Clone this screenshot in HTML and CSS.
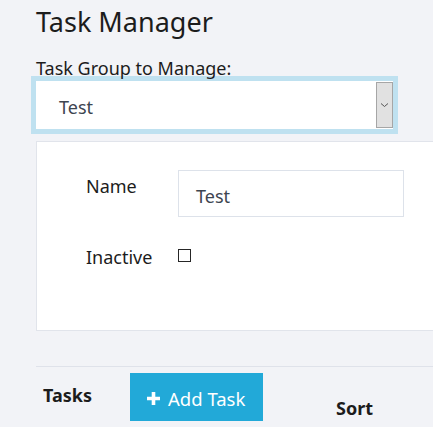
FILE: index.html
```html
<!DOCTYPE html>
<html>
<head>
<meta charset="utf-8">
<link rel="stylesheet" href="styles.css">
</head>
<body>
<div class="page">
  <h1 class="title">Task Manager</h1>
  <div class="group-label">Task Group to Manage:</div>
  <div class="select">
    <span class="select-value">Test</span>
    <span class="select-btn">
      <svg width="9" height="6" viewBox="0 0 9 6"><path d="M1 1.5 L4.5 4.5 L8 1.5" fill="none" stroke="#555" stroke-width="1"/></svg>
    </span>
  </div>
  <div class="card">
    <div class="row">
      <div class="field-label">Name</div>
      <div class="text-input">Test</div>
    </div>
    <div class="row row-inactive">
      <div class="field-label">Inactive</div>
      <span class="checkbox"></span>
    </div>
  </div>
  <div class="divider"></div>
  <div class="tasks-bar">
    <div class="tasks-label">Tasks</div>
    <button class="add-btn">
      <svg class="plus" width="13" height="13" viewBox="0 0 13 13"><path d="M6.5 0 V13 M0 6.5 H13" stroke="#fff" stroke-width="3.6"/></svg>
      <span>Add Task</span>
    </button>
    <div class="sort-label">Sort</div>
  </div>
</div>
</body>
</html>
```
FILE: styles.css
```css
html, body {
  margin: 0;
  padding: 0;
  background: #f2f3f7;
  overflow: hidden;
  height: 427px;
}
body {
  font-family: "Noto Sans", "Open Sans", sans-serif;
  color: #1c1c1c;
}
.page {
  padding-left: 36px;
}
.title {
  margin: 4px 0 0 0;
  font-size: 27px;
  line-height: 36px;
  font-weight: 400;
}
.group-label {
  margin-top: 17px;
  font-size: 18px;
  line-height: 22px;
}
.select {
  margin-top: 2px;
  width: 357px;
  height: 48px;
  box-sizing: border-box;
  background: #fff;
  box-shadow: 0 0 0 5px #bfe1f0;
  display: flex;
  justify-content: space-between;
}
.select-value {
  padding: 4px 0 0 23px;
  line-height: 44px;
  font-size: 18px;
  color: #3d4550;
}
.select-btn {
  margin-top: 1px;
  width: 17px;
  height: 46px;
  box-sizing: border-box;
  background: #e1e1e1;
  border: 1px solid #a6a6a6;
  display: flex;
  align-items: center;
  justify-content: center;
}
.card {
  margin-top: 12px;
  height: 190px;
  box-sizing: border-box;
  background: #fff;
  border: 1px solid #e1e4eb;
  border-right: none;
  padding: 28px 0 0 49px;
}
.row {
  display: flex;
  align-items: flex-start;
}
.field-label {
  width: 92px;
  margin-top: 5px;
  font-size: 18px;
  line-height: 22px;
}
.text-input {
  width: 226px;
  height: 47px;
  box-sizing: border-box;
  border: 1px solid #dde2ea;
  padding: 5px 0 0 17px;
  line-height: 40px;
  font-size: 18px;
  color: #3d4550;
}
.row-inactive {
  margin-top: 24px;
}
.checkbox {
  margin-top: 8px;
  width: 13px;
  height: 13px;
  box-sizing: border-box;
  border: 1px solid #262626;
  background: #fff;
}
.divider {
  margin-top: 35px;
  height: 1px;
  background: #dfe2ea;
}
.tasks-bar {
  margin-top: 6px;
  display: flex;
  align-items: flex-start;
}
.tasks-label {
  margin: 11px 0 0 7px;
  width: 87px;
  font-size: 18px;
  line-height: 22px;
  font-weight: 700;
}
.add-btn {
  width: 133px;
  height: 48px;
  border: none;
  background: #22a9d8;
  color: #fff;
  font-family: inherit;
  font-size: 18.5px;
  padding: 2px 0 0 17px;
  display: flex;
  align-items: center;
  gap: 8px;
  margin: 0;
}
.sort-label {
  margin: 24px 0 0 73px;
  font-size: 18px;
  line-height: 22px;
  font-weight: 700;
}
```
